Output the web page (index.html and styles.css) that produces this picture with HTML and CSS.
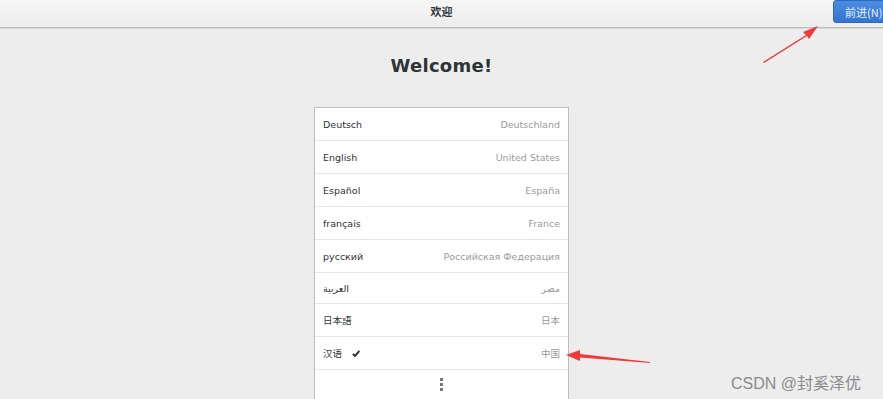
FILE: index.html
```html
<!DOCTYPE html>
<html>
<head>
<meta charset="utf-8">
<link rel="stylesheet" href="styles.css">
</head>
<body>
<header class="topbar">
  <div class="title">欢迎</div>
  <button class="next">前进(N)</button>
</header>
<main class="content">
  <h1 class="welcome">Welcome!</h1>
  <ul class="langs">
    <li class="row"><span class="lang">Deutsch</span><span class="region">Deutschland</span></li>
    <li class="row"><span class="lang">English</span><span class="region">United States</span></li>
    <li class="row"><span class="lang">Español</span><span class="region">España</span></li>
    <li class="row"><span class="lang">français</span><span class="region">France</span></li>
    <li class="row"><span class="lang">русский</span><span class="region">Российская Федерация</span></li>
    <li class="row short"><span class="lang">العربية</span><span class="region">مصر</span></li>
    <li class="row"><span class="lang">日本語</span><span class="region">日本</span></li>
    <li class="row"><span class="lang">汉语 <svg class="check" width="8" height="7" viewBox="0 0 8 7"><path d="M0.8 3.8 L3 6 L7.4 1" fill="none" stroke="#2e3436" stroke-width="1.9"/></svg></span><span class="region">中国</span></li>
    <li class="more"><span class="dots"><i></i><i></i><i></i></span></li>
  </ul>
</main>
<svg class="arrows" width="883" height="399" viewBox="0 0 883 399">
  <polygon points="763,62 806,35 803,32 818,26 809,39 807,36 764,63" fill="#f03a3a"/>
  <polygon points="650,363 580,357.5 580,361 566,355 580,350 580,354 650,362" fill="#f03a3a"/>
</svg>
<div class="watermark">CSDN @封奚泽优</div>
</body>
</html>
```
FILE: styles.css
```css
* { box-sizing: border-box; }
html, body { margin: 0; padding: 0; }
body {
  width: 883px;
  height: 399px;
  overflow: hidden;
  background: #ededed;
  font-family: "DejaVu Sans", "Noto Sans CJK SC", sans-serif;
  color: #2e3436;
  position: relative;
}
.topbar {
  height: 28px;
  background: linear-gradient(#f7f7f7, #ececec);
  border-bottom: 1px solid #bdbdbd;
  box-shadow: 0 1px 0 #d8d8d8;
  display: flex;
  align-items: center;
  justify-content: center;
  position: relative;
}
.title {
  font-family: "Noto Sans CJK SC", sans-serif;
  font-size: 11px;
  font-weight: 700;
  color: #2e3436;
  margin-top: -5px;
}
.next {
  position: absolute;
  left: 833px;
  top: 0;
  width: 60px;
  height: 23px;
  border: 1px solid #2a6bc0;
  border-radius: 3px 0 0 3px;
  background: linear-gradient(#4a8de0, #3274cf);
  color: #e8f0fb;
  font-family: "Noto Sans CJK SC", sans-serif;
  font-size: 11px;
  padding: 0 0 0 11px;
  text-align: left;
  white-space: nowrap;
}
.content {
  display: flex;
  flex-direction: column;
  align-items: center;
}
.welcome {
  margin: 23px 0 0 0;
  height: 56px;
  font-family: "DejaVu Sans", sans-serif;
  font-size: 18px;
  font-weight: 700;
  letter-spacing: 0.3px;
  color: #2e3436;
  line-height: 30px;
}
.langs {
  list-style: none;
  margin: 0;
  padding: 0;
  width: 255px;
  background: #fff;
  border: 1px solid #bcbcbc;
}
.row {
  height: 33px;
  display: flex;
  align-items: center;
  justify-content: space-between;
  padding: 0 8px 0 8px;
  border-bottom: 1px solid #e6e6e6;
  font-size: 9.5px;
}
.row.short { height: 31px; }
.lang {
  color: #2e3436;
  font-family: "DejaVu Sans", "Noto Sans CJK JP", sans-serif;
  display: flex;
  align-items: center;
  gap: 6px;
}
.region {
  color: #9a9a9a;
  font-family: "DejaVu Sans", "Noto Sans CJK JP", sans-serif;
}
.check { margin-left: 4px; }
.more {
  height: 29px;
  display: flex;
  align-items: center;
  justify-content: center;
}
.dots {
  display: flex;
  flex-direction: column;
  gap: 2px;
}
.dots i {
  display: block;
  width: 3px;
  height: 3px;
  background: #777;
}
.arrows {
  position: absolute;
  left: 0;
  top: 0;
  pointer-events: none;
}
.watermark {
  position: absolute;
  left: 731px;
  top: 370px;
  font-family: "Liberation Sans", "Noto Sans CJK SC", sans-serif;
  font-size: 16px;
  color: #8a8a8a;
}
```
